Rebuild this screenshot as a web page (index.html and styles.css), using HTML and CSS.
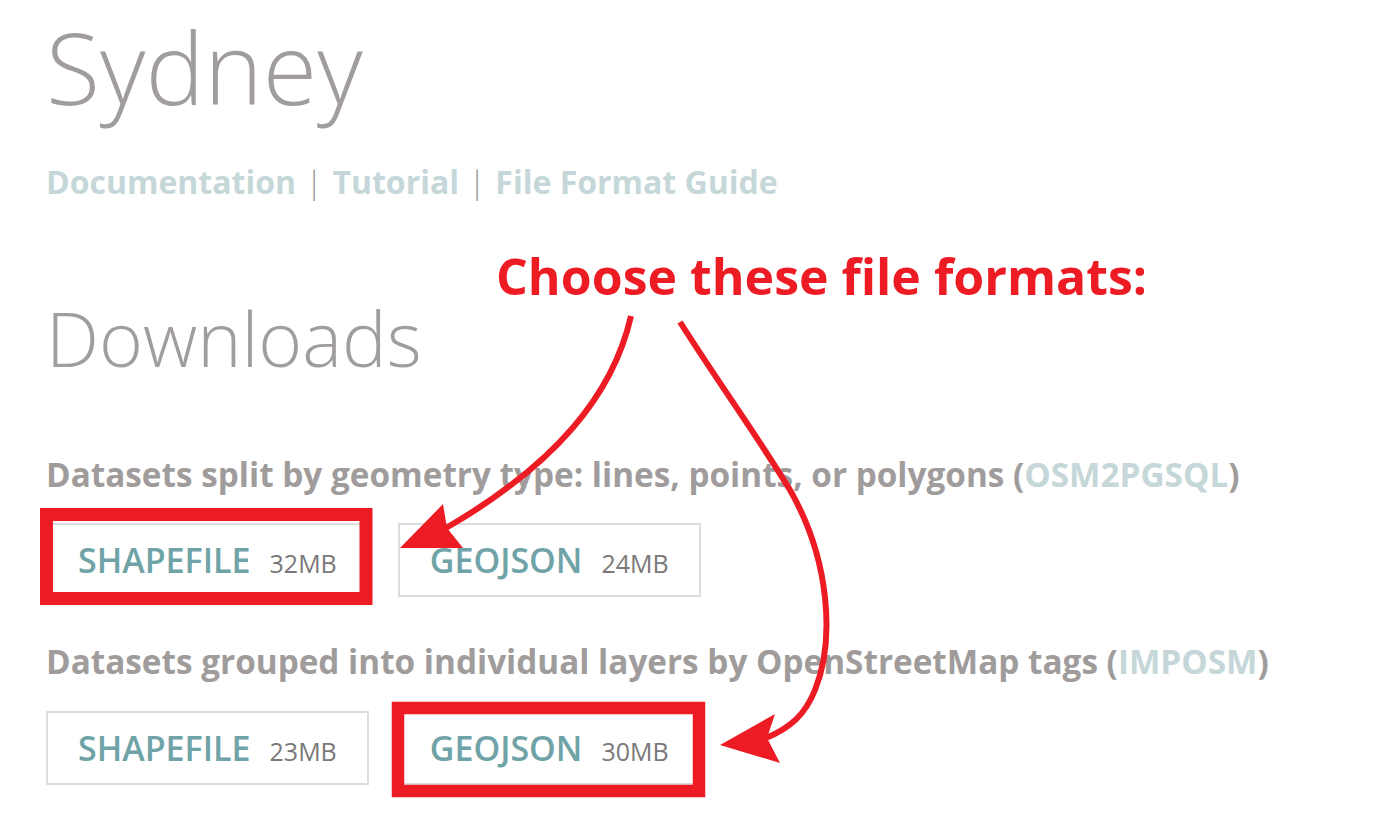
FILE: index.html
```html
<!DOCTYPE html>
<html lang="en">
<head>
<meta charset="utf-8">
<title>Sydney</title>
<link rel="stylesheet" href="styles.css">
</head>
<body>
<main class="page">
  <h1 class="city">Sydney</h1>
  <nav class="doc-links">
    <a href="#">Documentation</a><span class="sep">|</span><a href="#">Tutorial</a><span class="sep">|</span><a href="#">File Format Guide</a>
  </nav>
  <h2 class="section-title">Downloads</h2>
  <section class="dataset">
    <h3 class="dataset-title">Datasets split by geometry type: lines, points, or polygons (<a href="#">OSM2PGSQL</a>)</h3>
    <div class="buttons">
      <a class="btn" href="#"><span class="btn-label">SHAPEFILE</span><span class="btn-size">32MB</span></a>
      <a class="btn" href="#"><span class="btn-label">GEOJSON</span><span class="btn-size">24MB</span></a>
    </div>
  </section>
  <section class="dataset">
    <h3 class="dataset-title">Datasets grouped into individual layers by OpenStreetMap tags (<a href="#">IMPOSM</a>)</h3>
    <div class="buttons">
      <a class="btn" href="#"><span class="btn-label">SHAPEFILE</span><span class="btn-size">23MB</span></a>
      <a class="btn" href="#"><span class="btn-label">GEOJSON</span><span class="btn-size">30MB</span></a>
    </div>
  </section>
</main>
<div class="annotation">
  <p class="annotation-text">Choose these file formats:</p>
  <svg class="annotation-marks" width="1374" height="832" viewBox="0 0 1374 832" xmlns="http://www.w3.org/2000/svg">
    <g fill="none" stroke="#ed1c24">
      <rect x="46.5" y="514.5" width="319.5" height="84" stroke-width="13"/>
      <rect x="398" y="708" width="301" height="83" stroke-width="12.5"/>
      <path d="M631,316 C613,395 555,465 446,528" stroke-width="6"/>
      <path d="M680,322 C720,385 760,440 790,490 C830,560 835,640 815,690 C805,715 790,728 766,738" stroke-width="6"/>
    </g>
    <g fill="#ed1c24">
      <polygon points="400,548 443,504 447,528 463,548"/>
      <polygon points="720,745 775,714 767,738 780,763"/>
    </g>
  </svg>
</div>
</body>
</html>
```

FILE: styles.css
```css
html, body {
  margin: 0;
  padding: 0;
  background: #ffffff;
}

body {
  font-family: "Open Sans", "Noto Sans", sans-serif;
  width: 1374px;
  height: 832px;
  overflow: hidden;
  position: relative;
}

.page {
  padding-left: 46px;
}

.city {
  margin: 17px 0 0 0;
  font-size: 99px;
  line-height: 1;
  font-weight: 300;
  color: #a19d9d;
}

.doc-links {
  margin-top: 49.6px;
  font-size: 32px;
  line-height: 1;
  font-weight: 700;
  display: flex;
  align-items: baseline;
}

.doc-links a {
  color: #c5d7d9;
  text-decoration: none;
}

.sep {
  font-weight: 300;
  color: #999999;
  padding: 0 9.5px;
}

.section-title {
  margin: 103.8px 0 0 0;
  font-size: 75px;
  line-height: 1;
  font-weight: 300;
  color: #a19d9d;
}

.dataset-title {
  margin: 81.3px 0 0 0;
  font-size: 33.3px;
  line-height: 1;
  font-weight: 700;
  color: #a09c9c;
}

.dataset + .dataset .dataset-title {
  margin-top: 48.4px;
}

.dataset-title a {
  color: #c5d7d9;
  text-decoration: none;
}

.buttons {
  margin-top: 32px;
  display: flex;
  gap: 29px;
}

.btn {
  display: flex;
  align-items: baseline;
  gap: 19px;
  border: 2px solid #dddddd;
  padding: 18px 30px;
  text-decoration: none;
  line-height: 1;
}

.btn-label {
  font-size: 34px;
  font-weight: 600;
  color: #6fa3a7;
}

.btn-size {
  font-size: 25px;
  font-weight: 400;
  color: #7a7878;
}

.annotation {
  position: absolute;
  top: 0;
  left: 0;
  width: 1374px;
  height: 832px;
  pointer-events: none;
}

.annotation-text {
  position: absolute;
  left: 496px;
  top: 250.6px;
  margin: 0;
  font-size: 50px;
  line-height: 1;
  font-weight: 700;
  color: #ed1c24;
  white-space: nowrap;
}

.annotation-marks {
  position: absolute;
  top: 0;
  left: 0;
}
```
